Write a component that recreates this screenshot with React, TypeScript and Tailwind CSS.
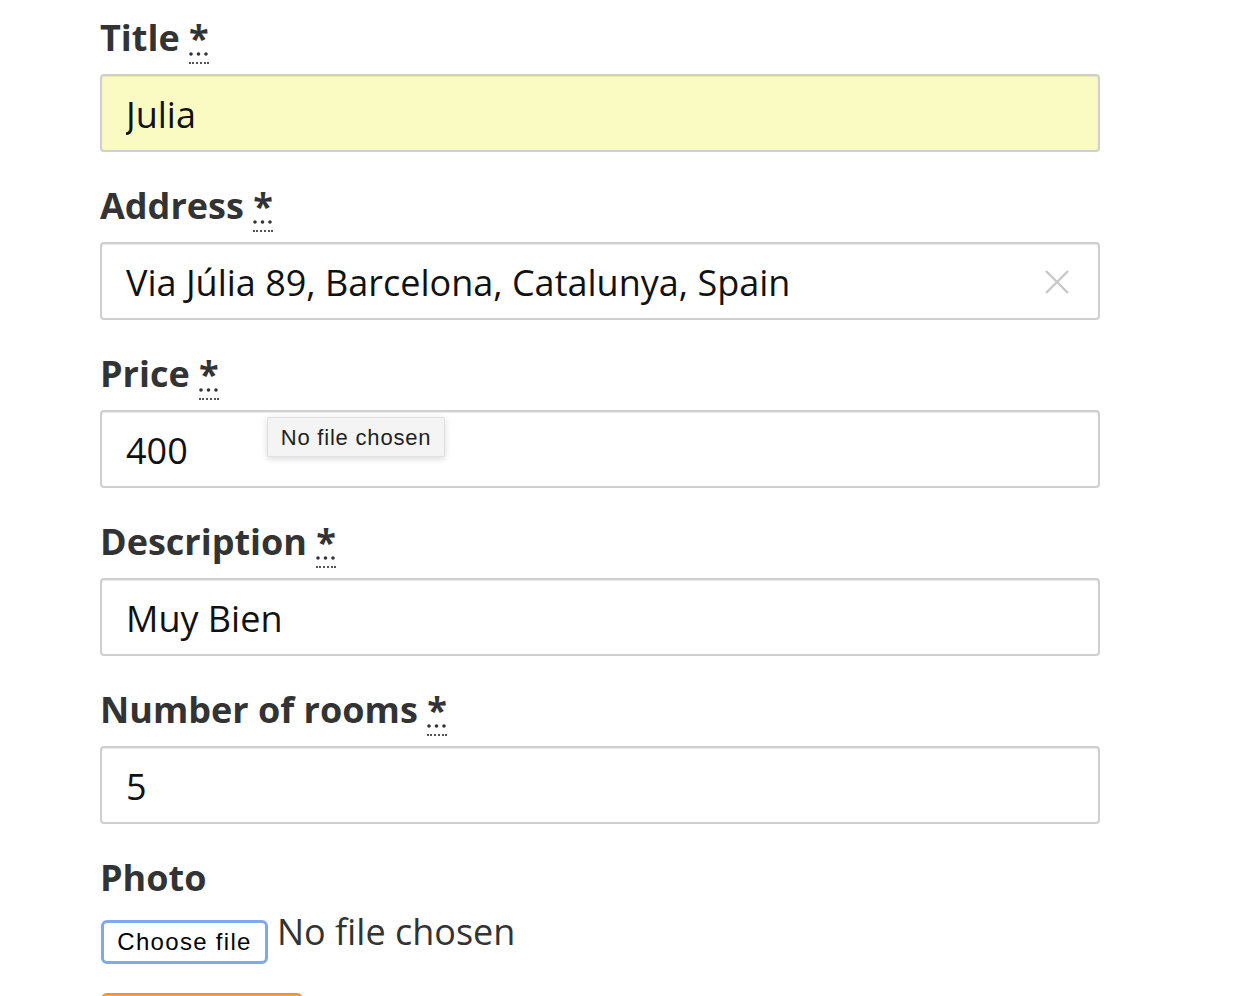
import { useState } from "react"

type Field = {
  label: string
  value: string
  required?: boolean
  highlight?: boolean
  clearable?: boolean
  tooltip?: string
}

const fields: Field[] = [
  { label: "Title", value: "Julia", required: true, highlight: true },
  { label: "Address", value: "Via Júlia 89, Barcelona, Catalunya, Spain", required: true, clearable: true },
  { label: "Price", value: "400", required: true, tooltip: "No file chosen" },
  { label: "Description", value: "Muy Bien", required: true },
  { label: "Number of rooms", value: "5", required: true },
]

function Label({ text, required }: { text: string; required?: boolean }) {
  return (
    <label className="block h-[50px] mb-[11px] text-[36px] leading-[50px] font-bold text-[#333]">
      {text}
      {required && (
        <>
          {" "}
          <abbr
            title="required"
            className="no-underline border-b-2 border-dotted border-[#555] [text-decoration:underline_dotted] cursor-help"
          >
            *
          </abbr>
        </>
      )}
    </label>
  )
}

function TextField({ field }: { field: Field }) {
  const [value, setValue] = useState(field.value)
  return (
    <div className="mb-[29px]">
      <Label text={field.label} required={field.required} />
      <div className="relative w-[1000px]">
        <input
          type="text"
          value={value}
          onChange={(e) => setValue(e.target.value)}
          className={
            "block w-full h-[78px] px-6 pt-[3px] border-2 border-[#cfcfcf] rounded-[4px] text-[36px] text-[#111] outline-none shadow-[inset_0_1px_1px_rgba(0,0,0,0.08)] " +
            (field.highlight ? "bg-[#fafbc3]" : "bg-white")
          }
        />
        {field.clearable && (
          <span className="absolute right-[30px] top-[27px] w-[26px] h-[26px] text-[#c8c8c8]">
            <svg viewBox="0 0 26 26" width="26" height="26" fill="none" stroke="currentColor" strokeWidth="2.4">
              <path d="M2 2 L24 24 M24 2 L2 24" />
            </svg>
          </span>
        )}
        {field.tooltip && (
          <div className="absolute left-[167px] top-[7px] w-[178px] h-[40px] flex items-center justify-center bg-[#f4f4f4] border border-[#e0e0e0] shadow-[0_2px_6px_rgba(0,0,0,0.15)] rounded-[2px] text-[22px] tracking-[0.8px] text-[#222] font-['Liberation_Sans',sans-serif]">
            {field.tooltip}
          </div>
        )}
      </div>
    </div>
  )
}

export default function App() {
  return (
    <div className="min-h-screen bg-white font-['Open_Sans',sans-serif] pl-[100px] pt-[13px] overflow-hidden">
      {fields.map((f) => (
        <TextField key={f.label} field={f} />
      ))}

      {/* Photo upload */}
      <div>
        <Label text="Photo" />
        <div className="flex items-start gap-[9px] mt-[-7px]">
          <button className="mt-[13px] h-[44px] w-[167px] ml-[1px] bg-white border-[3px] border-[#80a9ec] rounded-[6px] text-[24px] tracking-[1.3px] text-black font-['Liberation_Sans',sans-serif]">
            Choose file
          </button>
          <span className="text-[36px] leading-[50px] text-[#333]">No file chosen</span>
        </div>
        <button aria-label="Save" className="mt-[29px] ml-[1px] w-[202px] h-[60px] bg-[#f0ad4e] border-2 border-[#e8943a] rounded-[6px]" />
      </div>
    </div>
  )
}
